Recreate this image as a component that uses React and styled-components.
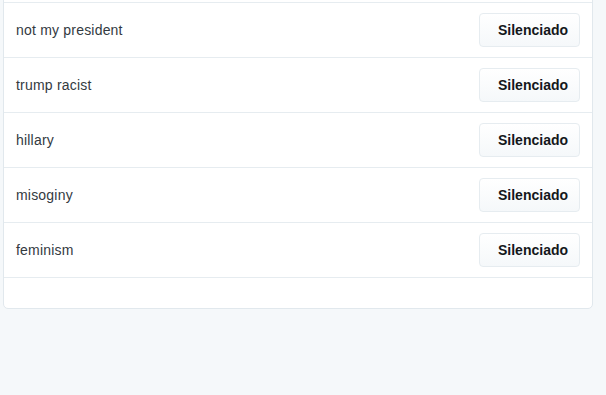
import styled, { createGlobalStyle } from "styled-components";

const GlobalStyle = createGlobalStyle`
  html, body {
    margin: 0;
    padding: 0;
    background: #f5f8fa;
    font-family: "Liberation Sans", Arial, sans-serif;
  }
`;

const words = ["not my president", "trump racist", "hillary", "misoginy", "feminism"];

function App() {
  return (
    <Page>
      <GlobalStyle />
      <Card>
        <List>
          {words.map((w) => (
            <Row key={w}>
              <Word>{w}</Word>
              <MuteButton>Silenciado</MuteButton>
            </Row>
          ))}
        </List>
      </Card>
    </Page>
  );
}

const Page = styled.div`
  width: 606px;
  height: 395px;
  overflow: hidden;
`;

const Card = styled.div`
  margin: -10px 0 0 3px;
  width: 588px;
  padding-top: 11px;
  padding-bottom: 30px;
  background: #fff;
  border: 1px solid #e1e8ed;
  border-radius: 5px;
`;

const List = styled.div`
  border-bottom: 1px solid #e6ecf0;
`;

const Row = styled.div`
  display: flex;
  align-items: center;
  justify-content: space-between;
  height: 54px;
  padding: 0 12px 0 12px;
  border-top: 1px solid #e6ecf0;
`;

const Word = styled.span`
  font-size: 14px;
  letter-spacing: 0.2px;
  color: #333a3f;
`;

const MuteButton = styled.button`
  box-sizing: border-box;
  height: 34px;
  width: 101px;
  padding: 0 10px 0 18px;
  font-family: "Liberation Sans", Arial, sans-serif;
  font-size: 14px;
  font-weight: bold;
  color: #14171a;
  background: linear-gradient(#fff, #f5f8fa);
  border: 1px solid #e6ecf0;
  border-radius: 4px;
  text-align: left;
`;

export default App;
